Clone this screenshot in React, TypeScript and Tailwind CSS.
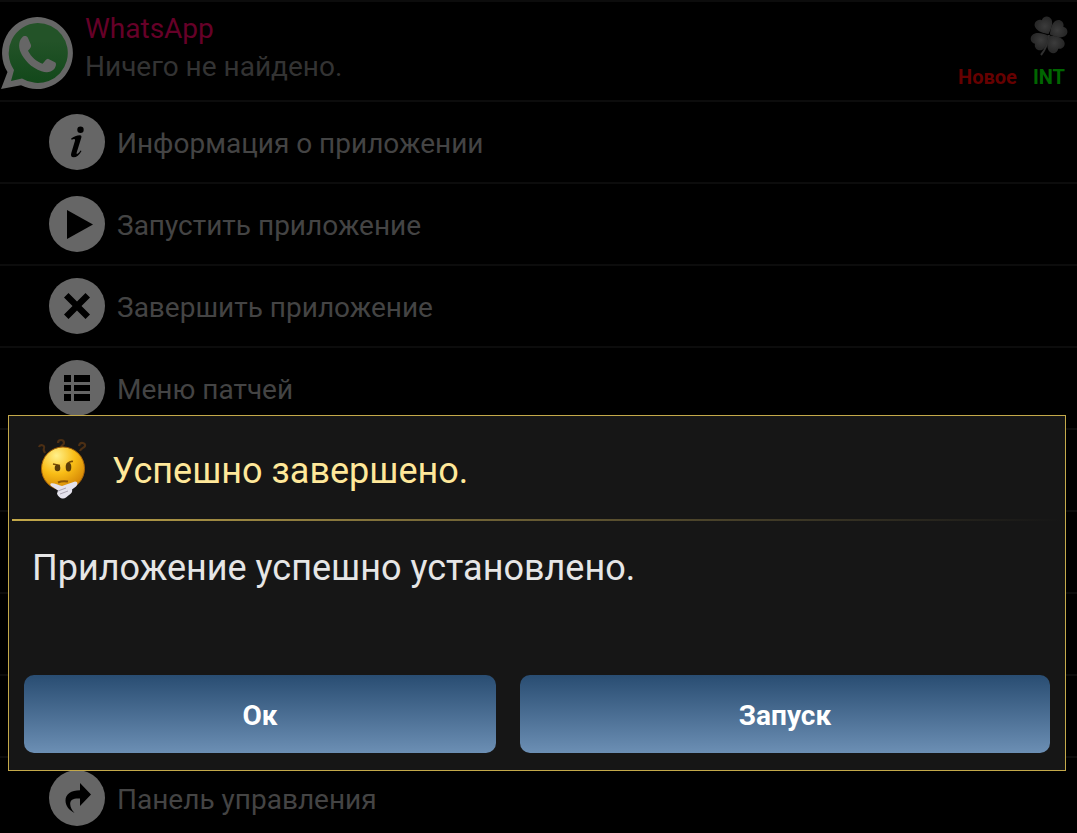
import type { ReactNode } from "react";

type MenuItem = { id: number; label?: string; icon?: ReactNode };

const items: MenuItem[] = [
    {
        id: 1,
        label: "Информация о приложении",
        icon: (
            <>
                <circle cx="31.5" cy="15.7" r="3.2" />
                <path d="M22 24.800c2.800-2.200 6-3.600 9-3.500 1.400.1 1.700 1 1.300 2.500l-4.600 14.800c-.4 1.500.2 1.800 1.200 1 1-.8 1.900-2 2.600-3.200l1 .6c-2.200 4-5 6.300-7.800 6.300-2.400 0-3.200-1.800-2.400-4.400l3.600-12c.6-2-.4-2.600-3.200-1.200z" />
            </>
        ),
    },
    { id: 2, label: "Запустить приложение", icon: <path d="M18 14v29l26-14.500z" /> },
    {
        id: 3,
        label: "Завершить приложение",
        icon: <path d="M19.500 15l8.500 8.500 8.500-8.500 4.500 4.500-8.500 8.500 8.500 8.500-4.500 4.500-8.500-8.500-8.500 8.500-4.500-4.500 8.500-8.500-8.500-8.500z" />,
    },
    {
        id: 4,
        label: "Меню патчей",
        icon: <path d="M15 15h7v7h-7zM25 15h16v7h-16zM15 25h7v6h-7zM25 25h16v6h-16zM15 34h7v7h-7zM25 34h16v7h-16z" />,
    },
    { id: 5 },
    { id: 6 },
    { id: 7 },
    { id: 8 },
    {
        id: 9,
        label: "Панель управления",
        icon: <path d="M31 13l11 11.500-11 11.500v-7.500c-6-.5-10 1-9.800 5.500.1 3 1.500 6 4.300 9-5.500-3-9-7-9-12.500 0-6.500 5.500-10 14.500-10.200z" />,
    },
];

export default function App() {
    return (
        <div className="relative h-screen overflow-hidden bg-black font-[Roboto,sans-serif]">
            <header className="flex justify-between border-t-2 border-[#0c0c0c] pr-2 pb-2.5">
                <div className="flex">
                    <WhatsAppLogo />
                    <div className="ml-[11px] pt-2">
                        <h1 className="text-[28px] leading-[38px] text-[#660028]">WhatsApp</h1>
                        <p className="text-[28px] leading-[38px] text-[#333]">Ничего не найдено.</p>
                    </div>
                </div>
                <div className="flex flex-col items-end pt-3">
                    <Clover />
                    <div className="flex gap-4 pt-2 pr-1 text-[20px] leading-[26px] font-bold">
                        <span className="text-[#660000]">Новое</span>
                        <span className="text-[#006600]">INT</span>
                    </div>
                </div>
            </header>

            <ul>
                {items.map(item => (
                    <MenuRow key={item.id} {...item} />
                ))}
            </ul>

            <ResultDialog />
        </div>
    );
}

function MenuRow({ label, icon }: MenuItem) {
    return (
        <li className="h-[82px] border-t-2 border-[#0c0c0c]">
            {label && (
                <button className="flex h-full w-full items-center gap-3 pl-[49px] text-left text-[28px] text-[#444]">
                    <svg viewBox="0 0 56 56" className="size-14 shrink-0" aria-hidden="true">
                        <circle cx="28" cy="28" r="28" fill="#666" />
                        <g fill="#000">{icon}</g>
                    </svg>
                    <span className="pt-1">{label}</span>
                </button>
            )}
        </li>
    );
}

function ResultDialog() {
    return (
        <div
            role="dialog"
            aria-labelledby="result-title"
            className="absolute right-[11px] bottom-[62px] left-2 border border-[#c4a94a] bg-[#161616] px-[3px] pb-[17px]"
        >
            <div className="flex h-[103px] items-center gap-5 pl-[22px]">
                <ThinkingFace />
                <h2 id="result-title" className="pt-1.5 text-[36px] text-[#ffe89a]">Успешно завершено.</h2>
            </div>
            <div className="h-0.5 bg-linear-to-r from-[#c4a94a] to-[#161616]" />
            <p className="h-[154px] px-5 pt-5 text-[36px] text-[#e6e6e6]">Приложение успешно установлено.</p>
            <div className="flex gap-6 px-3">
                <DialogButton className="flex-[472]">Ок</DialogButton>
                <DialogButton className="flex-[530]">Запуск</DialogButton>
            </div>
        </div>
    );
}

function DialogButton({ className, children }: { className: string; children: ReactNode }) {
    return (
        <button
            className={`${className} h-[78px] rounded-[10px] bg-linear-to-b from-[#294d72] to-[#6c8fb4] pt-1 text-[28px] font-bold text-white`}
        >
            {children}
        </button>
    );
}

function WhatsAppLogo() {
    return (
        <svg viewBox="0 0 74 74" className="mt-3.5 size-[74px]" role="img" aria-label="WhatsApp">
            <defs>
                <linearGradient id="wa" x1="0" y1="0" x2="0" y2="1">
                    <stop offset="0.3" stopColor="#235328" />
                    <stop offset="1" stopColor="#12481a" />
                </linearGradient>
            </defs>
            <path d="M37 1a36 36 0 1 1-16 68.300L1 73l6.500-17A36 36 0 0 1 37 1z" fill="#666" />
            <path d="M37.500 7a30 30 0 1 1-15.500 55.500L11 65l3-11A30 30 0 0 1 37.500 7z" fill="url(#wa)" />
            <path d="M23 20.500c2-.8 4-.6 5 1.500l3 7c.5 1.500-.5 3-3 5.800 3.500 6.500 8 10.500 14.500 13 2-2 3.500-5 5.500-5l7 3.500c2 1 .6 5-1 7-3.500 3.500-8 3.500-12.500 2C31 51.500 24 44 20.500 36c-2.500-6-1.500-12 2.500-15.500z" fill="#666" />
        </svg>
    );
}

function Clover() {
    const leaf = "M0-1C-4-4-9-8-9-13c0-5 6-7 9-3.500 3-3.500 9-1.500 9 3.500C9-8 4-4 0-1z";
    return (
        <svg viewBox="0 0 42 42" className="size-[42px]" aria-hidden="true">
            <defs>
                <radialGradient id="leaf">
                    <stop offset="0" stopColor="#3c3c3c" />
                    <stop offset="1" stopColor="#282828" />
                </radialGradient>
            </defs>
            <path d="M22 21c-1 9-3 14-8 20" fill="none" stroke="#303030" strokeWidth="2" />
            <g fill="url(#leaf)">
                {[-26, 60, 146, 238].map(angle => (
                    <path key={angle} d={leaf} transform={`translate(22 21) rotate(${angle})`} />
                ))}
            </g>
        </svg>
    );
}

function ThinkingFace() {
    return (
        <svg viewBox="0 0 58 62" className="h-[62px] w-[58px]" aria-hidden="true">
            <defs>
                <radialGradient id="face" cx="0.35" cy="0.2" r="0.85">
                    <stop offset="0" stopColor="#fff08a" />
                    <stop offset="0.5" stopColor="#f9bd16" />
                    <stop offset="1" stopColor="#d08004" />
                </radialGradient>
            </defs>
            <g fill="none" stroke="#4c2f14" strokeWidth="2.2">
                <path d="M5 10c1-3 6-2 5 1-1 2 0 3 1 5" />
                <path d="M24 6c0-4 6-4 6 0 0 2-3 2-3 5" />
                <path d="M45 9c1-5 7-3 6 0-1 2-4 2-5 5" />
            </g>
            <circle cx="29" cy="31.5" r="21.500" fill="url(#face)" stroke="#a86408" />
            <path d="M19 27l7 1.500M33 27c2-2 4-3 6-2.500" fill="none" stroke="#7a4c04" strokeWidth="1.5" />
            <ellipse cx="23.500" cy="31" rx="2.800" ry="3.200" fill="#5a3c08" />
            <ellipse cx="34.500" cy="30" rx="2.800" ry="4.500" fill="#5a3c08" />
            <path d="M24 45.500c3-1.500 7-1.500 10-1" fill="none" stroke="#8c5605" strokeWidth="2" />
            <path d="M17 46.500c2-1 7 1.500 11 2.500l13-4.500c3 0 3 3 1 5l-4 3c1 4-3 5-6 8-3 2.500-8 0-9-4l1-3-6-4c-2-1-2-3-1-3z" fill="#e4e2ec" />
            <path d="M24 54l8-3M26 57l8-3" fill="none" stroke="#a9a3b0" />
        </svg>
    );
}
